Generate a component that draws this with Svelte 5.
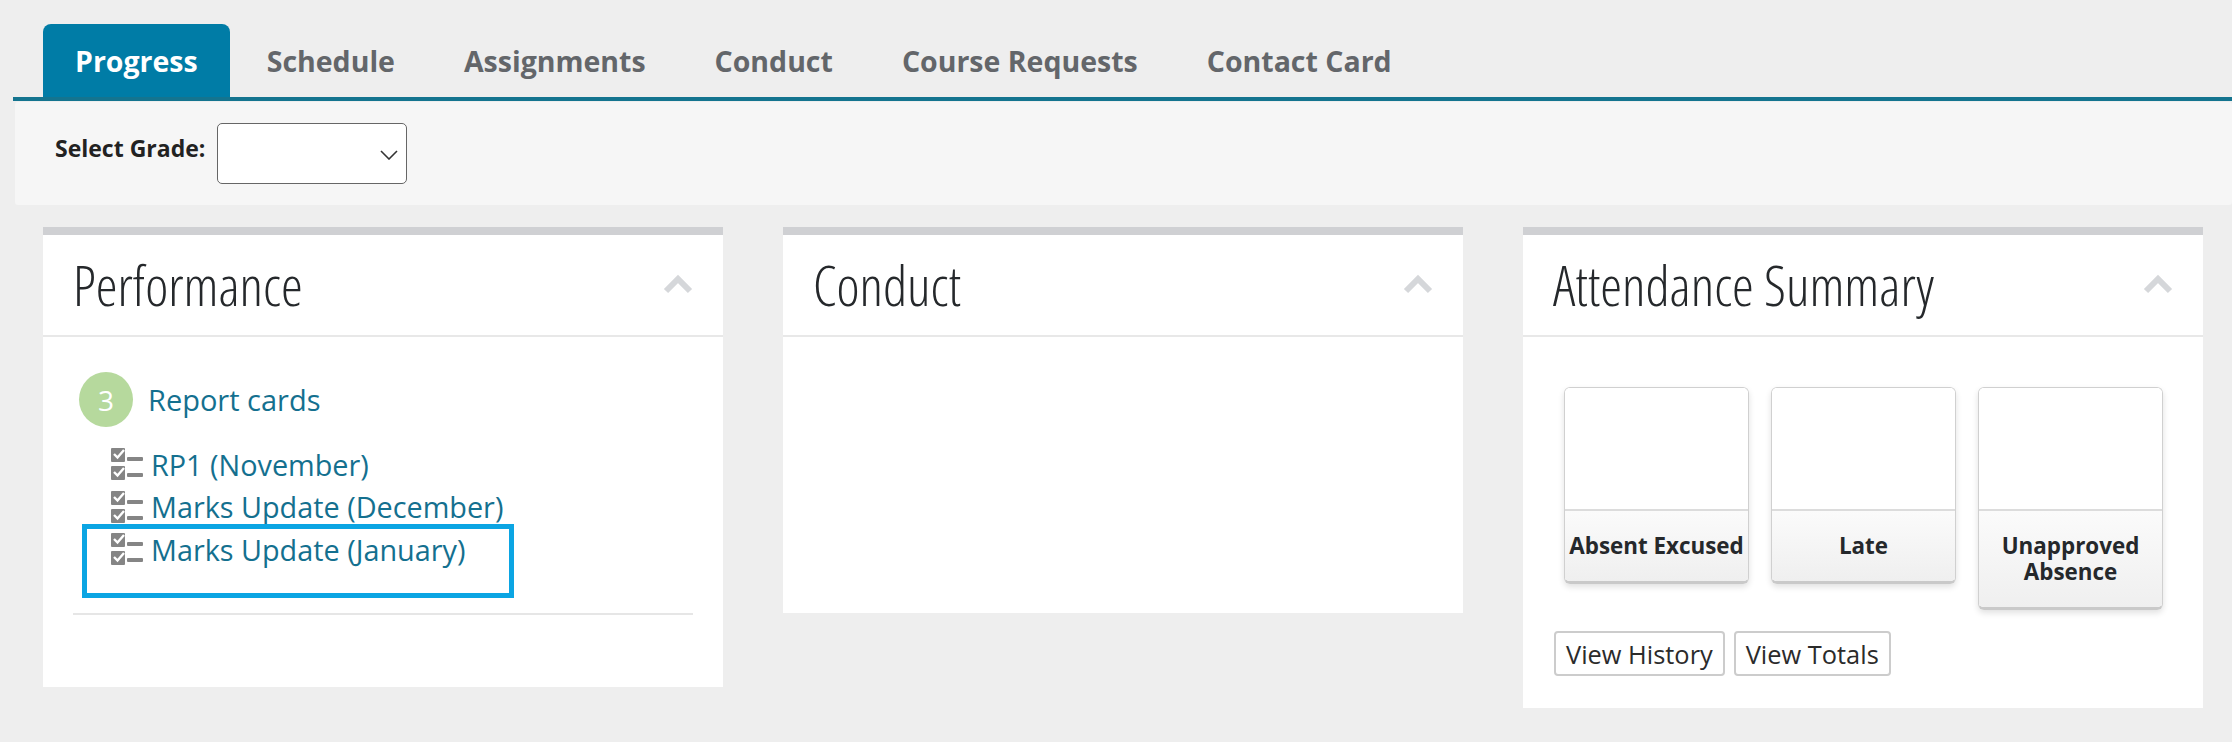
<script>
  const tabs = ["Progress", "Schedule", "Assignments", "Conduct", "Course Requests", "Contact Card"];
  const reports = ["RP1 (November)", "Marks Update (December)", "Marks Update (January)"];
  const tiles = ["Absent Excused", "Late", "Unapproved Absence"];
</script>

{#snippet chevron()}
  <svg class="chevron" width="30" height="20" viewBox="0 0 30 20">
    <path d="M3 17 L15 5 L27 17" fill="none" stroke="#d5d7da" stroke-width="6" />
  </svg>
{/snippet}

{#snippet checklist()}
  <svg class="check-icon" width="32" height="32" viewBox="0 0 32 32">
    <rect x="0" y="0" width="14" height="14" rx="1" fill="#858585" />
    <path d="M3 6 L6.5 9.5 L13 2" fill="none" stroke="#fff" stroke-width="2.4" />
    <rect x="16" y="9" width="16" height="4" rx="1" fill="#858585" />
    <rect x="0" y="18" width="14" height="14" rx="1" fill="#858585" />
    <path d="M3 24 L6.5 27.5 L13 20" fill="none" stroke="#fff" stroke-width="2.4" />
    <rect x="16" y="25" width="16" height="4" rx="1" fill="#858585" />
  </svg>
{/snippet}

<main class="page">
  <nav class="tabs">
    {#each tabs as tab, i}
      <a class="tab" class:active={i === 0} href="#top">{tab}</a>
    {/each}
  </nav>

  <div class="toolbar">
    <label for="grade">Select Grade:</label>
    <div class="select-wrap">
      <select id="grade"><option></option></select>
      <svg class="select-arrow" width="18" height="10" viewBox="0 0 18 10">
        <path d="M1 1 L9 9 L17 1" fill="none" stroke="#333" stroke-width="1.6" />
      </svg>
    </div>
  </div>

  <div class="panels">
    <section class="panel performance">
      <header><h2>Performance</h2>{@render chevron()}</header>
      <div class="panel-body">
        <div class="report-head">
          <span class="count">3</span>
          <a href="#top">Report cards</a>
        </div>
        <ul>
          {#each reports as report}
            <li>{@render checklist()}<a href="#top">{report}</a></li>
          {/each}
        </ul>
        <div class="highlight"></div>
      </div>
    </section>

    <section class="panel conduct">
      <header><h2>Conduct</h2>{@render chevron()}</header>
    </section>

    <section class="panel attendance">
      <header><h2>Attendance Summary</h2>{@render chevron()}</header>
      <div class="tiles">
        {#each tiles as tile}
          <div class="tile">
            <div class="tile-top"></div>
            <div class="tile-label">{tile}</div>
          </div>
        {/each}
      </div>
      <div class="actions">
        <button>View History</button>
        <button>View Totals</button>
      </div>
    </section>
  </div>
</main>

<style>
:global(body) {
  background: #eeeeee;
  font-family: "Open Sans", "Noto Sans", sans-serif;
}
.page {
  display: block;
  height: 742px;
  padding-top: 24px;
  box-sizing: border-box;
  overflow: hidden;
}
.tabs {
  display: flex;
  gap: 5px;
  margin-left: 13px;
  padding-left: 30px;
  border-bottom: 4px solid #14748f;
  height: 73px;
}
.tab {
  padding: 0 32px;
  font-size: 28.5px;
  font-weight: 700;
  line-height: 74px;
  color: #63666a;
  text-decoration: none;
}
.tab.active {
  background: #007ca6;
  color: #fff;
  border-radius: 8px 8px 0 0;
}
.toolbar {
  display: flex;
  align-items: center;
  gap: 12px;
  height: 103px;
  margin: 1px 0 0 15px;
  padding-left: 40px;
  background: #f6f6f6;
  border-radius: 3px;
}
label {
  font-size: 23px;
  font-weight: 700;
  color: #222;
  margin-top: -12px;
}
.select-wrap {
  position: relative;
  display: flex;
}
select {
  appearance: none;
  width: 190px;
  height: 61px;
  border: 1.5px solid #666;
  border-radius: 5px;
  background: #fff;
}
.select-arrow {
  position: absolute;
  right: 9px;
  top: 27px;
}
.panels {
  display: grid;
  grid-template-columns: repeat(3, 680px);
  gap: 60px;
  margin: 22px 0 0 43px;
  align-items: start;
}
.panel {
  background: #fff;
  border-top: 8px solid #cfd0d3;
  box-sizing: border-box;
}
.performance { height: 460px; }
.conduct { height: 386px; }
.attendance { height: 481px; }
header {
  display: flex;
  align-items: center;
  justify-content: space-between;
  height: 100px;
  padding: 0 30px 0 30px;
  border-bottom: 2px solid #e8e8e8;
}
h2 {
  margin: -2px 0 0;
  font-family: "Open Sans", sans-serif;
  font-size: 55px;
  font-weight: 300;
  font-stretch: 75%;
  color: #25282b;
}
.chevron { margin-top: -2px; }
.panel-body {
  position: relative;
  margin: 0 30px;
  padding: 35px 0 0;
  height: 241px;
  border-bottom: 2px solid #e6e6e6;
}
.report-head {
  display: flex;
  align-items: center;
  gap: 15px;
  margin-left: 6px;
}
.report-head a {
  font-size: 29px;
  color: #14708f;
  text-decoration: none;
}
.count {
  display: flex;
  align-items: center;
  justify-content: center;
  width: 54px;
  height: 55px;
  border-radius: 50%;
  background: #b6d99d;
  color: #fff;
  font-size: 28px;
}
ul {
  list-style: none;
  margin: 16px 0 0 38px;
  padding: 0;
}
li {
  display: flex;
  align-items: center;
  gap: 8px;
  height: 42.5px;
}
li a {
  font-size: 28.8px;
  color: #14708f;
  text-decoration: none;
}
.highlight {
  position: absolute;
  left: 9px;
  top: 187px;
  width: 432px;
  height: 74px;
  box-sizing: border-box;
  border: 5px solid #0ba5e3;
}
.tiles {
  display: flex;
  gap: 22px;
  margin: 50px 0 0 41px;
  align-items: flex-start;
}
.tile {
  width: 185px;
  box-sizing: border-box;
  border: 1px solid #d0d0d0;
  border-bottom: 3px solid #c9c9c9;
  border-radius: 6px;
  box-shadow: 0 3px 6px rgba(0, 0, 0, 0.12);
  overflow: hidden;
}
.tile-top {
  height: 121px;
  background: #fff;
  border-bottom: 2px solid #dcdcdc;
}
.tile-label {
  padding: 22px 0 22px;
  min-height: 26px;
  background: linear-gradient(#fbfbfb, #efefef);
  font-size: 22.4px;
  line-height: 26px;
  font-weight: 700;
  text-align: center;
  color: #25282b;
}
.actions {
  display: flex;
  gap: 9px;
  margin: 21px 0 0 31px;
}
button {
  height: 45px;
  padding: 0 10px;
  background: #fff;
  border: 2px solid #cccccc;
  border-radius: 4px;
  font-family: inherit;
  font-size: 25.4px;
  color: #2b2b2b;
}
</style>
